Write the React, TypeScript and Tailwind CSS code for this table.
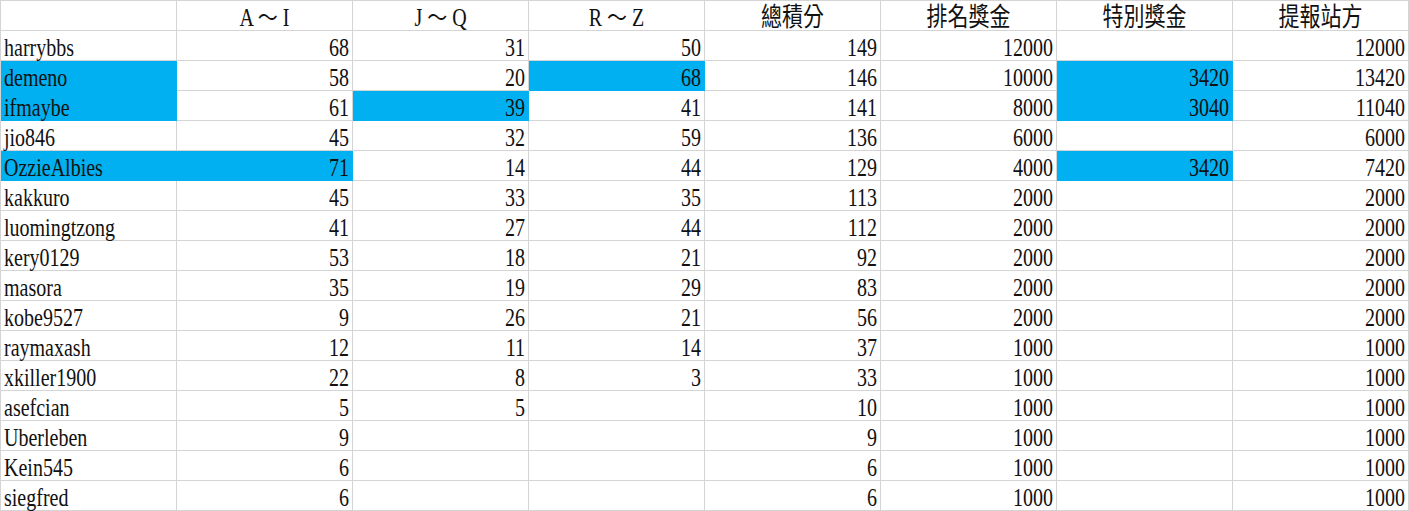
import React from "react";

type Row = { v: (string | number)[]; hl: number[] };

const rows: Row[] = [
  { v: ["harrybbs", 68, 31, 50, 149, 12000, "", 12000], hl: [] },
  { v: ["demeno", 58, 20, 68, 146, 10000, 3420, 13420], hl: [0, 3, 6] },
  { v: ["ifmaybe", 61, 39, 41, 141, 8000, 3040, 11040], hl: [0, 2, 6] },
  { v: ["jio846", 45, 32, 59, 136, 6000, "", 6000], hl: [] },
  { v: ["OzzieAlbies", 71, 14, 44, 129, 4000, 3420, 7420], hl: [0, 1, 6] },
  { v: ["kakkuro", 45, 33, 35, 113, 2000, "", 2000], hl: [] },
  { v: ["luomingtzong", 41, 27, 44, 112, 2000, "", 2000], hl: [] },
  { v: ["kery0129", 53, 18, 21, 92, 2000, "", 2000], hl: [] },
  { v: ["masora", 35, 19, 29, 83, 2000, "", 2000], hl: [] },
  { v: ["kobe9527", 9, 26, 21, 56, 2000, "", 2000], hl: [] },
  { v: ["raymaxash", 12, 11, 14, 37, 1000, "", 1000], hl: [] },
  { v: ["xkiller1900", 22, 8, 3, 33, 1000, "", 1000], hl: [] },
  { v: ["asefcian", 5, 5, "", 10, 1000, "", 1000], hl: [] },
  { v: ["Uberleben", 9, "", "", 9, 1000, "", 1000], hl: [] },
  { v: ["Kein545", 6, "", "", 6, 1000, "", 1000], hl: [] },
  { v: ["siegfred", 6, "", "", 6, 1000, "", 1000], hl: [] },
];

const headers = ["", "A ～ I", "J ～ Q", "R ～ Z", "總積分", "排名獎金", "特別獎金", "提報站方"];

function Txt({ children, cjk }: { children: React.ReactNode; cjk?: boolean }) {
  return (
    <span
      className={`inline-block origin-bottom scale-y-[1.22] whitespace-nowrap leading-[20px] ${
        cjk ? "text-[21px]" : "text-[20px]"
      }`}
    >
      {children}
    </span>
  );
}

export default function App() {
  return (
    <div className="w-[1409px] bg-white text-[#111] overflow-hidden font-['Liberation_Serif','Times_New_Roman',Tinos,'DejaVu_Serif','Noto_Sans_CJK_TC',serif]">
      <div className="grid grid-cols-[repeat(8,176px)] border-l border-t border-[#d4d4d4]">
        {headers.map((h, i) => (
          <div
            key={`h${i}`}
            className="h-[30px] border-r border-b border-[#d4d4d4] flex items-end justify-center pb-0"
          >
            <Txt cjk={i >= 4}>{h}</Txt>
          </div>
        ))}
        {rows.map((r, ri) =>
          r.v.map((c, ci) => {
            const hl = r.hl.includes(ci);
            return (
              <div
                key={`${ri}-${ci}`}
                className={`h-[30px] border-r border-b flex items-end ${
                  ci === 0 ? "justify-start pl-[3px]" : "justify-end pr-[3px]"
                } ${hl ? "bg-[#00b0f0] border-[#00b0f0]" : "border-[#d4d4d4]"}`}
              >
                <Txt>{c}</Txt>
              </div>
            );
          })
        )}
      </div>
    </div>
  );
}
